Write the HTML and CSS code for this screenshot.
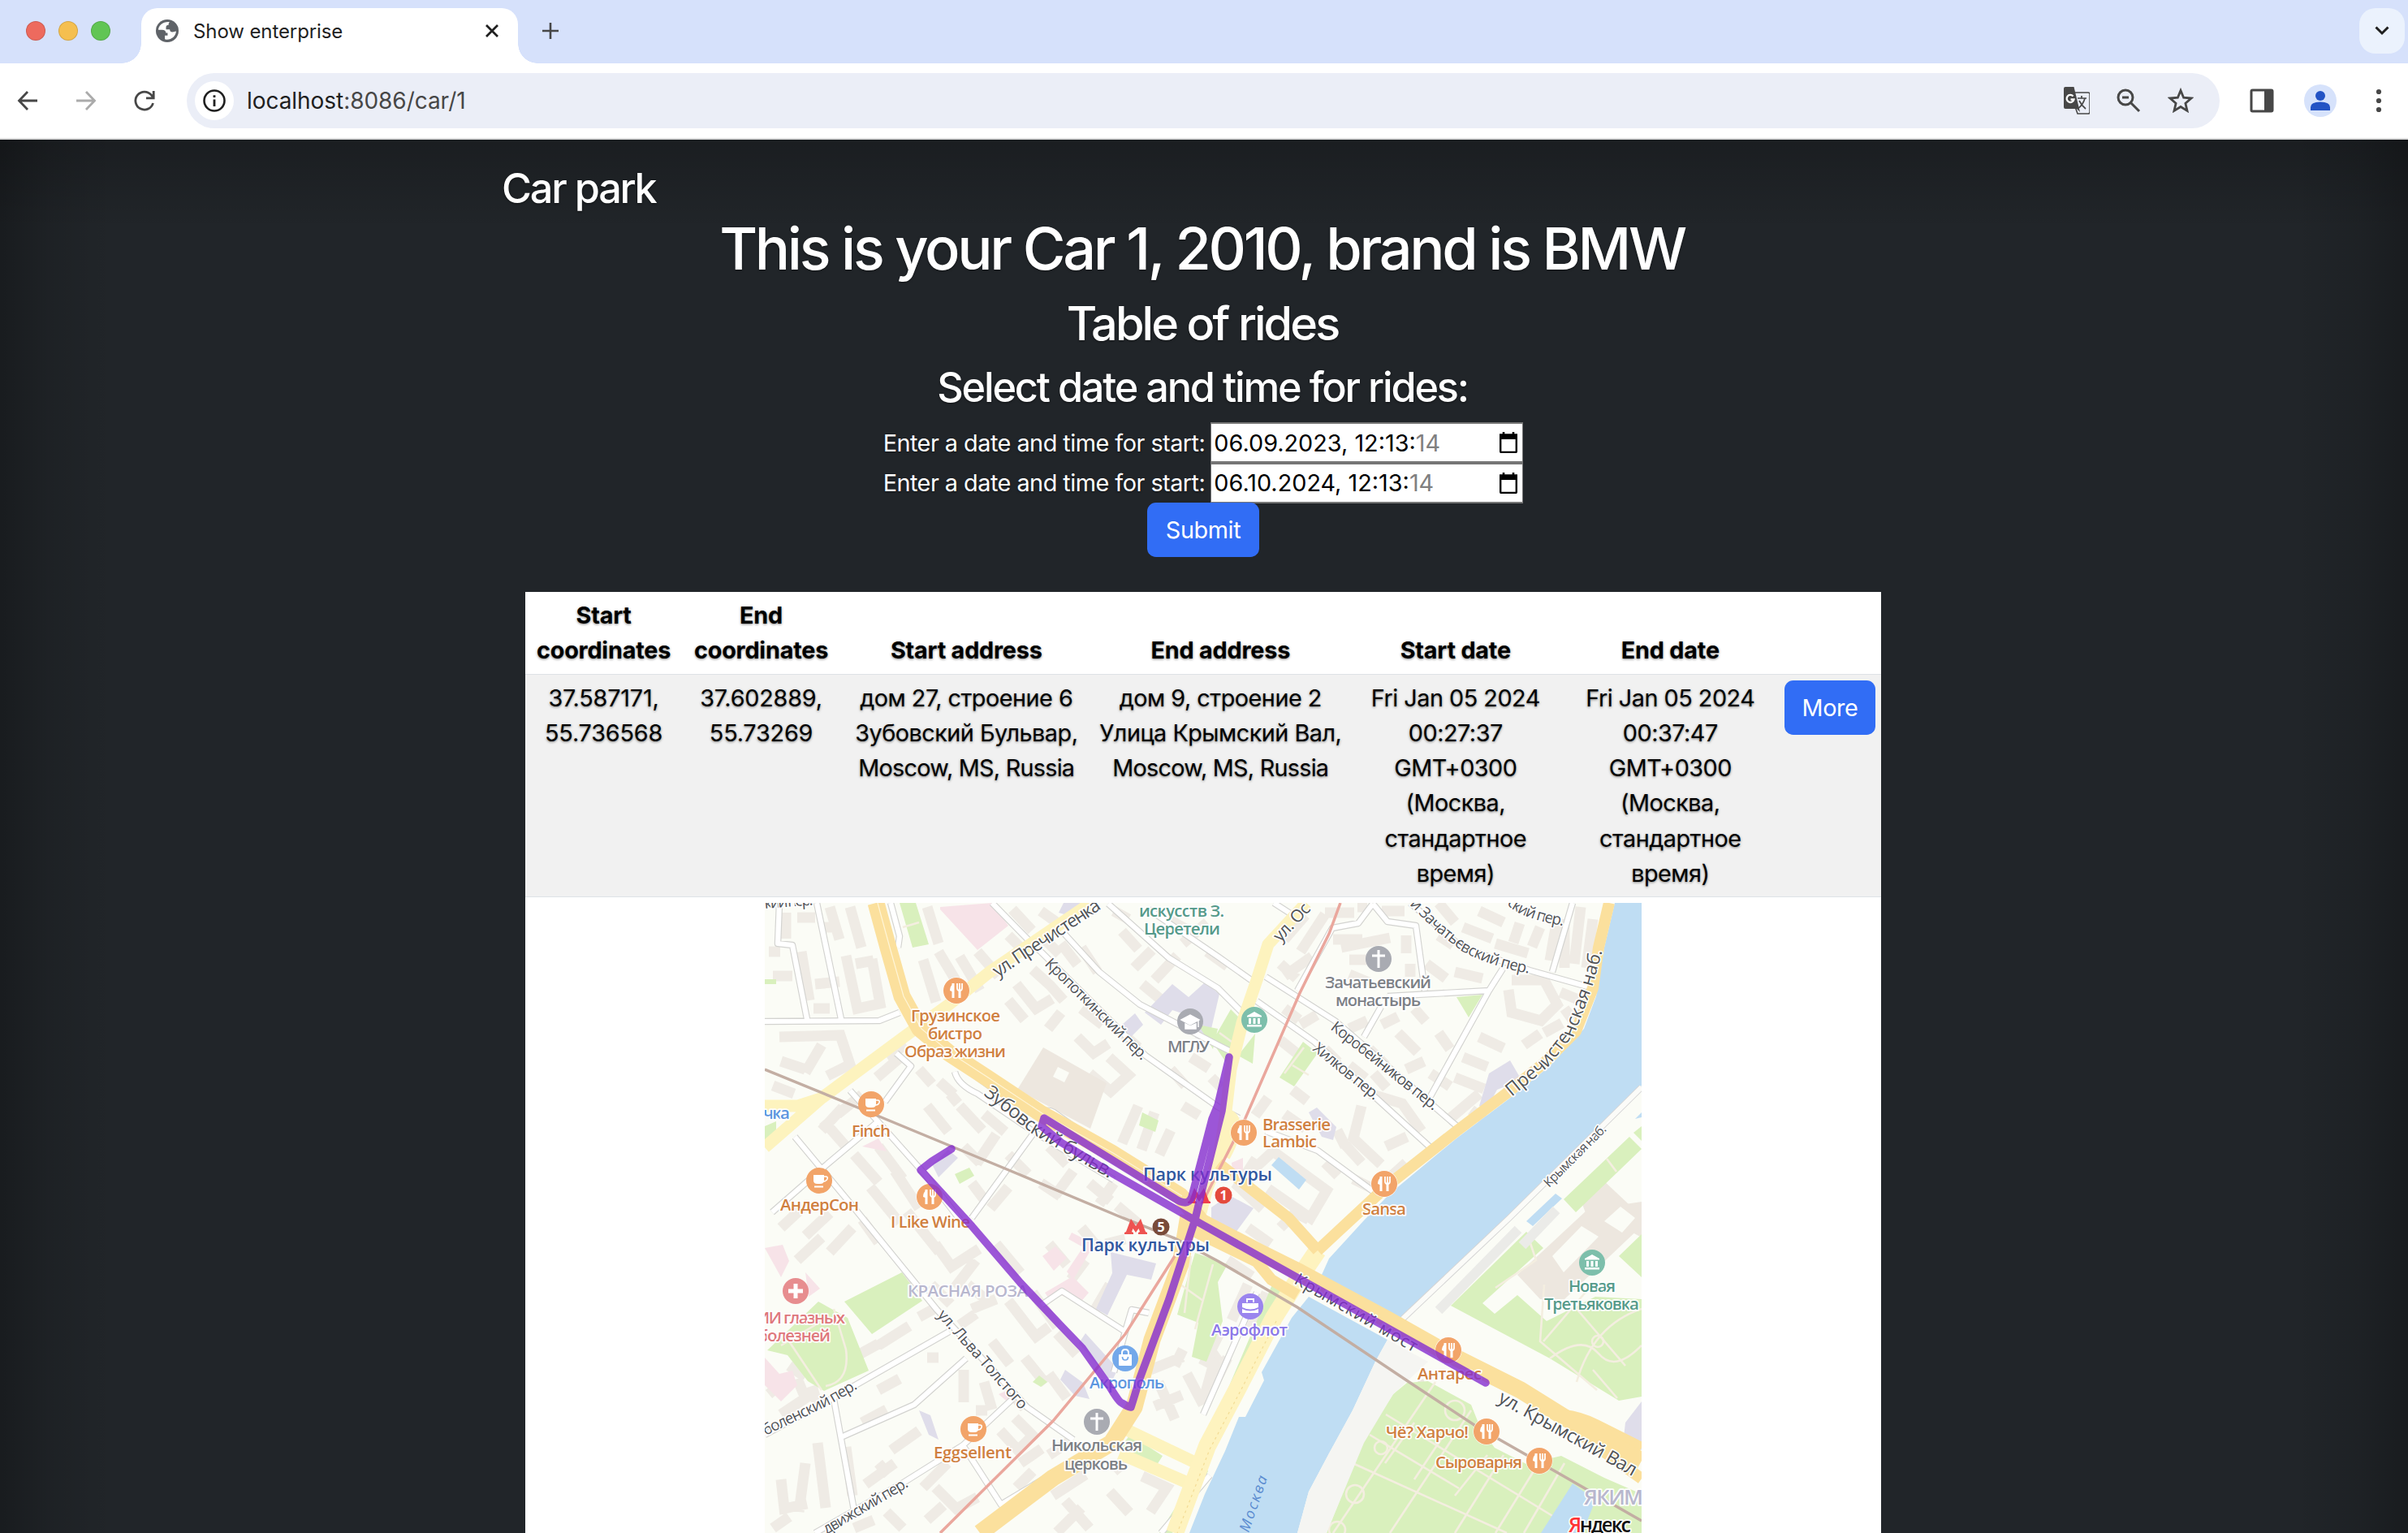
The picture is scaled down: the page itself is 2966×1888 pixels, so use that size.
FILE: index.html
```html
<!DOCTYPE html>
<html lang="en">
<head>
<meta charset="utf-8">
<title>Show enterprise</title>
<link rel="stylesheet" href="styles.css">
</head>
<body>
<div class="browser">
  <div class="tabstrip">
    <div class="lights"><i class="light red"></i><i class="light amber"></i><i class="light green"></i></div>
    <div class="tab">
      <svg class="favicon" viewBox="0 0 24 24"><circle cx="12" cy="12" r="12" fill="#5f6368"/><path fill="#fff" d="M14.500 2.600C7.500 2 2.600 6.500 2.600 11h4c2.600 0 4 1.400 4 3.200h1.800v2.800H9.500v3.800c5 1.800 11.300-2 11.900-8.300-1.500 0-2.200.8-3.800.8-2 0-2.900-1.300-2.900-2.900h-4V8.300c0-1.800.9-2.300 2.600-2.300 0-1.600.4-2.600 1.200-3.400z"/></svg>
      <span class="tab-title">Show enterprise</span>
      <svg class="close" viewBox="0 0 16 16"><path d="M1 1l14 14M15 1L1 15" stroke="#1f1f1f" stroke-width="2.800"/></svg>
    </div>
    <svg class="plus" viewBox="0 0 20 20"><path d="M10 0v20M0 10h20" stroke="#474747" stroke-width="2.600"/></svg>
    <div class="chevron"><svg viewBox="0 0 18 12"><path d="M1.500 1.500L9 9l7.500-7.500" fill="none" stroke="#1f1f1f" stroke-width="3"/></svg></div>
  </div>
  <div class="toolbar">
    <svg class="nav" viewBox="0 0 32 32"><path d="M28 16H6M16 5L5.500 16 16 27" fill="none" stroke="#474747" stroke-width="2.800"/></svg>
    <svg class="nav" viewBox="0 0 32 32"><path d="M4 16h22M16 5l10.500 11L16 27" fill="none" stroke="#ababab" stroke-width="2.800"/></svg>
    <svg class="nav" viewBox="0 0 32 32"><path d="M26.500 19A11 11 0 1 1 24.500 9.200L27 12.500M27.200 4v8.800H18" fill="none" stroke="#474747" stroke-width="2.800"/></svg>
    <div class="omnibox">
      <div class="info"><svg viewBox="0 0 28 28"><circle cx="14" cy="14" r="12.500" fill="none" stroke="#1f1f1f" stroke-width="2.600"/><path d="M14 12.500V21M14 7.200V10" stroke="#1f1f1f" stroke-width="2.800"/></svg></div>
      <span class="url">localhost<span class="path">:8086/car/1</span></span>
      <div class="actions">
        <svg viewBox="0 0 32 34"><path d="M2 0h10.500L20 31l-4-4H2q-2 0-2-2V2q0-2 2-2z" fill="#474747"/><path d="M13.500 7H30q2 0 2 2v22q0 2-2 2H17l-2.500-7" fill="none" stroke="#474747" stroke-width="1.600"/><path d="M17 14h11M22 11v3M26 14q-2 8-9 13M19 17q3 6 8 10" fill="none" stroke="#474747" stroke-width="1.700"/><path d="M11.500 11.500a4.500 4.500 0 1 0 1 4H8.500" fill="none" stroke="#fff" stroke-width="2.300"/></svg>
        <svg viewBox="0 0 32 32"><circle cx="12" cy="12" r="9" fill="none" stroke="#474747" stroke-width="3"/><path d="M8 12h8M18.500 18.500L29 29" stroke="#474747" stroke-width="3"/></svg>
        <svg viewBox="0 0 32 32"><path d="M16 3.500l3.600 8.700 9.400.8-7.100 6.200 2.100 9.200-8-4.900-8 4.900 2.100-9.200L3 13l9.400-.8z" fill="none" stroke="#474747" stroke-width="2.800"/></svg>
      </div>
    </div>
    <svg class="panel" viewBox="0 0 30 30"><rect x="2" y="2" width="26" height="26" rx="1.500" fill="#fff" stroke="#474747" stroke-width="3"/><path d="M18 2h10v26H18z" fill="#474747"/></svg>
    <svg class="avatar" viewBox="0 0 40 40"><circle cx="20" cy="20" r="20" fill="#d6e2fb"/><circle cx="20" cy="14" r="6" fill="#2353c4"/><path d="M8 32v-4q0-6.500 12-6.500T32 28v4z" fill="#2353c4"/></svg>
    <svg class="dots" viewBox="0 0 8 30"><circle cx="4" cy="4" r="3.100"/><circle cx="4" cy="15" r="3.100"/><circle cx="4" cy="26" r="3.100"/></svg>
  </div>
</div>

<div class="page">
  <div class="cover">
    <header><h3 class="brand">Car park</h3></header>
    <main>
      <h1>This is your Car 1, 2010, brand is BMW</h1>
      <h2>Table of rides</h2>
      <h3 class="select">Select date and time for rides:</h3>
      <form>
        <div class="field"><label>Enter a date and time for start:</label><div class="date"><span>06.09.2023, 12:13:<span class="sec">14</span></span><svg viewBox="0 0 22 26"><path d="M5 0v4M17 0v4" stroke="#000" stroke-width="2.600"/><path d="M1.200 3.500h19.600V24q0 1-1 1H2.200q-1 0-1-1z" fill="none" stroke="#000" stroke-width="2.400"/><path d="M0 3h22v6H0z"/></svg></div></div>
        <div class="field"><label>Enter a date and time for start:</label><div class="date"><span>06.10.2024, 12:13:<span class="sec">14</span></span><svg viewBox="0 0 22 26"><path d="M5 0v4M17 0v4" stroke="#000" stroke-width="2.600"/><path d="M1.200 3.500h19.600V24q0 1-1 1H2.200q-1 0-1-1z" fill="none" stroke="#000" stroke-width="2.400"/><path d="M0 3h22v6H0z"/></svg></div></div>
        <button class="btn submit" type="button">Submit</button>
      </form>
      <table class="rides">
        <colgroup><col class="c1"><col class="c2"><col class="c3"><col class="c4"><col class="c5"><col class="c6"><col class="c7"></colgroup>
        <thead><tr><th>Start<br>coordinates</th><th>End<br>coordinates</th><th>Start address</th><th>End address</th><th>Start date</th><th>End date</th><th></th></tr></thead>
        <tbody>
          <tr class="odd"><td class="num-cell">37.587171,<br>55.736568</td><td class="num-cell">37.602889,<br>55.73269</td><td>дом 27, строение 6<br>Зубовский Бульвар,<br><span class="latin">Moscow, MS, Russia</span></td><td>дом 9, строение 2<br>Улица Крымский Вал,<br><span class="latin">Moscow, MS, Russia</span></td><td>Fri Jan 05 2024<br>00:27:37<br>GMT+0300<br>(Москва,<br>стандартное<br>время)</td><td>Fri Jan 05 2024<br>00:37:47<br>GMT+0300<br>(Москва,<br>стандартное<br>время)</td><td><button class="btn more" type="button">More</button></td></tr>
          <tr><td colspan="7">
<svg class="map" viewBox="0 0 1080 776">
  <defs>
    <g id="fork"><circle r="16.500" fill="#fff"/><circle r="16" fill="#f2a469"/><path d="M-4-9v18M4 0v9" stroke="#fff" stroke-width="3"/><path d="M-3-9q-5 3-5 9l5 2z" fill="#fff"/><path d="M1-9v6q0 3 3 3t3-3v-6M4-9v8" fill="none" stroke="#fff" stroke-width="1.800"/></g>
    <g id="cup"><circle r="16" fill="#f2a469"/><path d="M-7-7H6V0q0 4-5 4h-3q-5 0-5-4zM-6 6.500H5v2H-6z" fill="#fff"/><path d="M6-5h2q3 0 2 3-1 3-5 3" fill="none" stroke="#fff" stroke-width="1.600"/></g>
    <g id="cross"><circle r="16" fill="#a9abb2"/><path d="M0-11v22M-8-4H8" stroke="#fff" stroke-width="3"/></g>
    <g id="museum"><circle r="16" fill="#7dbfab"/><path d="M-9-5L0-10 9-5v1.500H-9zM-7-2h3v7h-3zM-1.500-2h3v7h-3zM4-2h3v7H4zM-9 6H9v2.500H-9z" fill="#fff"/></g>
    <path id="metro" d="M-14 10v-2l2-1 6-16L0 0l6-9L12 7l2 1v2H3V8l2-1-1.500-4L0 8-3.500 3-5 7l2 1v2z"/>
    <path id="minor" d="M18 0l-2 50 18 2 18 91M64 0l30 143M0 146l141-1 25-10M155 0l11 41-2 14M280 0l47 48 14 13 128 127 89 63 26 14M617 281l64 24 68 50M369 38l43 47 50 40 96 50 16 8M423 1l75 67 60 37 30 30M473 8l85 58 41 29M606 121l71 50 147 134M617 91l85 54 154 133M627 0l25 16M749 1l-18 24-32 6-43 77M749 1l18 22 35 5 11 80M767 115l125-7 17-27M892 108l-72 130M759 128l-21 37M795 0l64 55 83 28 71 20M995 0l-25 85M37 288l75 90 100 123 111 120 57 40M9 381l64-56 68-57M105 231l36 40 57 64 46 60M330 285l-75 103M162 185l18 16-32 44M234 208q4 16 28 27l68 46 100 60M0 655l87-47 140-80M248 561l-64 57-90 40M85 611l25 137M62 776l107-61 75-47 61-57M244 668l47 73 100-60M341 495l25-17 78 50-14 50M444 528l8-27 21 4M340 262q6-10 16-4l90 64M262 215l28 20-4 12M548 705l-60 71M606 480l-66 150"/>
  </defs>
  <rect width="1080" height="776" fill="#fbfcf6"/>
  <!-- city blocks -->
  <g fill="none" stroke="#efebe5" stroke-width="13">
    <path d="M26 12v32M40 18h22M80 5l12 40M105 5l14 50M70 30h14M45 60l10 60M62 100l30-3M100 65l14 65 28-6-10-55M112 75l22-4M60 130h20M10 90h24M5 60h14M200 5l14 45M214 60l30 50M195 70l16 52M240 66l25 42M262 60l26 30M300 40l22 22M305 8l24 26M340 10l28 20M365 50l20 26M345 45l18 18M390 55l20 30M310 100l24 30 20-12M300 120l20 24M330 82l22 20 16 18M365 135l-16 20M385 165l20 20 18-12M400 210l26 22 22-20-24-22M350 190l24 20M440 35l20 22M455 80l22-22M480 95l28-30M515 50l30-26M500 22l22 12M430 10l18 10M545 60l25 18M465 100l24 20M440 160l20 18M500 205l18 20M525 190l22 14M550 215l12 12M390 130l26 20M460 250l-20 46M480 258l-16 46M500 280l-14 30M515 250l20 12"/>
    <path d="M18 165l75-2 12 36-28 14M70 175l-20 34M20 195l30 10M10 225l26 10M90 260l30-24M70 280l26-28M100 300l-28-32M150 190l24-16M138 215l28-24M190 205l16 18M215 220l18 16M240 250l28 30M200 250l26 32M228 235l10 12M270 260l26 22M285 285l-24 36M245 300l20 20M300 310l24 24M350 300l22 22M380 330l-22 30M340 345l24 16M400 345l26 22M430 345l-18 26M300 350l-22 26M255 345l18 24M460 395l-26-22M110 310l30 34M140 300l30 40M160 330l30 46M130 350l36 44M20 400l28-26M50 410l30-28M80 430l28-30M40 440l30-28M120 390l20 28M175 380l40 50M210 420l20 28 34-22M260 440l-26 34M205 470l24 24M250 470l22 18M285 420l30 36M255 500l30-12M300 490l34 44 16-12M330 480l30 42M360 530l24 26M350 420l22 26M390 400l20 24M395 440l-18 24M425 470l-20 34M420 420l24-6M180 460l-20 26M140 545l38-24M100 565l40-22M190 510l22-12M200 560h14M245 575v40M270 590l10 34M260 625h14M240 520l20-14M280 540l22 28M320 560l26 32M350 580l22 30M300 600l20 22M290 650l22 24 18-18-22-22M315 690l26-18M350 680l24-16M330 700l-20 20M225 690l-30 30M210 720l26 26 26-14M160 690l-36 26M190 650l-34 24M120 640l30-16M140 600l26-14M20 630l30-20-10-24M5 605l24-20M30 570l20 14M58 595l8 26M65 665l10 80M100 670l8 60M50 690l-8 60M20 710l4 36 28-6M140 690l12 14M150 750l20 20M200 760l20-18M110 770l24-10M10 770l20-14M355 730l40-26M360 775l30-30M400 770l-30-34M425 725l24 26M475 750l20-30-30-14M430 700l14-12M475 575l40-16M485 590l20 46M520 580l20 38M480 620l34-14M505 570l10-20M545 545l14 20M550 600l20-40"/>
    <path d="M640 45l26-30M660 60l30-46M640 90l34-24M635 75l20 18M700 45h36M720 70h24M710 55l60-12M790 40v22M795 75v16M720 88l24 10M690 12h36M730 5h12M760 10h28M830 0l20 24M830 40l18 12M815 75l24 18M850 85l34 8M860 30l36 14M900 50l40 12M880 10l30 14M930 25l-8 24M955 30l-10 24M975 25l-8 46M1005 5l-8 70M1020 20l-8 60M985 20v60M920 95h40l16 30-20 20-36-10-4-28M980 110l24 10M985 130l10 14M960 160l22-12M935 175l20-14M880 165l30 14M860 190l30 12M830 160l14 20M820 210l24 16M850 215l36 14M880 235l-40 34M870 255l16 12M780 160l24 24M760 150l20-10M720 155l22-10M745 180l20 20M790 205l22-10M800 130l14 16M750 210l16 18M720 200l20 16M690 180l16 16M660 150l20-12M640 130l18 14M655 185l-20-16M745 235l40 12 24 34M735 250l-10 40 34 32M765 300l26-12M790 320l-20 18M735 320l-20-22M725 340l24 12M640 260l26 18M650 230l18 14M620 240l-16 22M605 315l-22 34 30 28M600 330l26-24 66 48-20 34-52-36M650 380l20 10M690 320l16 16M705 280l10 20"/>
    <path d="M595 400l28 20M570 440l30 20M595 470l-20 44M618 480l-20 46M555 560l-14 50M560 530l-20 40M655 380l-20 20"/>
  </g>
  <g fill="#ede7df">
    <path d="M343 178l78 44-20 56-90-48zM927 458l86-80 67-10v30L985 488h-30zM785 600l26-14 8 20-14 32-22-10z"/>
    <path d="M1005 366l26-26 49 46v26l-22-12-30 26z"/>
  </g>
  <path d="M970 435l36-37 21 13-43 44zM361 202l14 7-6 12-14-7zM1034 392l20-18 18 14-16 18z" fill="#fbfcf6"/>
  <path d="M468 135l34-35 20 16 20-18 18 14-14 60-16-6-4-26-24-8-14 18zM440 150l16-14 10 14-20 20zM206 322l20-18 12 10-24 24zM426 430l56 14-6 20-30-6-24 50-14-8 20-44zM395 530l40 44-8 16-40-48zM370 575l22 16 8 20-18-4-18-20zM880 250l12-40 26-16 14 24-30 12-14 26zM670 258l10-6 24 24-4 16-14-4zM550 375l22-15 30 16-22 30-30-14zM190 625l14 6 10 30-12-6zM368 0h24l-10 18-20-6zM1060 640l20-26v60l-22-16z" fill="#dfddea"/>
  <path d="M216 5l64-5 20 28-38 30-46-50zM0 425l22-4 8 20-10 20zM50 455l18 20-14 10zM342 435l16-12 14 14-16 16zM345 480l34-20 20 20-12 14-24-12-10 10zM0 560l18 20 16-4 6 18-20 20-20-20zM288 605l14-6v18zM120 300l20-10 10 16zM575 320l14-6v24l-12 6zM372 454l20-30-18-10 4-8 28 14-26 44z" fill="#f7e3e8"/>
  <!-- parks -->
  <g fill="#d9f0bd">
    <path d="M166 0h20l16 51-20 4zM98 491l71-36 25 35-62 41zM3 551l63-60 36 20 26 65-55 25-20-12-25-32zM530 431l40 14-12 22 6 48-20 50-18-6 8-42-26-10 14-50zM574 131l14 14-14 60-23-34zM604 161l-3 37-18-10zM663 171l18 14-29 41-18-11zM852 116l32-3-17 28zM845 496l93-91 21 20-75 68 15 13 28-23 36 32 60-30 57 3v120l-28 5-85-52zM1052 435l28-27v53zM984 365l81-77 15 15-81 78zM1070 283l10-8v18zM465 258l20 10-4 14-20-8zM540 690l6 10-44 76h-16zM625 470l12 6-50 110-30 60 6-30zM450 655l40 26-14 22-40-30zM0 94h14v6H0zM0 275l14-6v12L0 298zM234 334l18-8 6 10-18 10zM534 150l24 5-6 25zM330 590l8-8 10 8-8 6z"/>
    <path d="M774 605l17-14 26-2 53 29 12 30 17 23 39 20 43-10 53 27 46 20v48H692l46-115z"/>
  </g>
  <g fill="none" stroke="#f4eee0" stroke-width="2.600">
    <path d="M765 630l230 140M724 690l190 86M826 590L700 776M870 625l-100 151M910 680l-60 96M950 695l-50 81M985 690l-50 86M800 640l-36 50M840 650l-40 60M745 655l110 66M890 680l-40 50M960 470l-5 70 70 60M940 410l10 30-50 34M959 540l60-70M1000 500l60 70M967 561q40-30 60-6t53-10M1000 590q20-70 80-90M1020 575l30 35M30 540l40 60M85 500l15 50q5 40-25 45M20 545l50-30M512 470l28 20M525 435l-8 70M552 445l-22 80M560 160l22 16M640 210l24-32M650 200l20 12M1037 315l12 16M170 30l20-6"/>
    <circle cx="759" cy="671" r="8"/><circle cx="727" cy="728" r="11"/><circle cx="1026" cy="540" r="7"/><circle cx="705" cy="772" r="10"/><circle cx="850" cy="625" r="12"/>
  </g>
  <!-- river -->
  <g fill="#bfddf3">
    <path d="M1047 0h33v225L917 388 781 513l-95-55 9-20 43-47 32-33 82-68 65-49 50-40 42-46 15-40 10-60z"/>
    <path d="M670 485l97 53-15 27-28 60-29 53-25 47-14 51H523l19-48 25-53 17-42h8l23-45-3-10 37-67z"/>
    <path d="M633 313l34 28-9 12-34-30zM974 358l8 6-36 34-8-6zM995 715l22 16 4 10-14 35h-51zM1080 258l-8 8 8-2z"/>
  </g>
  <path d="M767 538l50 27-43 40-36 60-46 111h-36l14-51 25-47 29-53 28-60z" fill="#f5f5f2"/>
  <path d="M1080 227L917 388 786 512" fill="none" stroke="#d5d5d5" stroke-width="8"/><path d="M1080 227L917 388 786 512" fill="none" stroke="#fbfbf8" stroke-width="6"/>
  <path d="M928 402L830 502M975 378l-42 44" stroke="#ebebe8" stroke-width="12"/>
  <!-- streets: casing, then surface -->
  <g fill="none" stroke-linejoin="round">
    <use href="#minor" stroke="#d3d3d0" stroke-width="8.500"/>
    <use href="#minor" stroke="#fff" stroke-width="6.200"/>
    <!-- yellow streets -->
    <path stroke="#fdf3be" stroke-width="15" d="M402 0L277 85l-50 40-50 36L69 241 0 301M0 250l41 0 28-9M444 648l90 43M437 678l86 37M667 0l-47 51-14 44-18 53-14 57-7 60-8 50-14 36-8 30M572 262q16 10-6 50"/>
    <path stroke="#fef3bf" stroke-width="22" d="M681 428l-25 37-29 46-43 84-39 74-40 107"/>
    <!-- ring road and embankment -->
    <path stroke="#fbe09d" stroke-width="14" d="M1040 0l-13 55-7 50-21 53-40 40-46 37-61 46-85 67-43 40-43 40M559 321l86 67 36 40M520 400l86 42 18 22 32 19M984 631l29 30 67 48M984 631q20 2 40 12l56 28"/>
    <path stroke="#fbe09d" stroke-width="21" d="M137 0l15 55 17 60 22 40 36 30 46 30 68 45 86 48 85 53 26 32 71 37 50 25 108 58 78 44 86 43 53 33 96 54M522 385l-10 60-35 93-22 83-28 44-72 43-90 68"/>
  </g>
  <g fill="none" stroke="#fff5d6" stroke-width="1.200"><path d="M139 0l15 55 17 60 22 40 36 30 46 30 68 45 86 48 85 53"/><path d="M630 515l-43 84-39 74-40 103" stroke="#f3dc95" stroke-dasharray="3 4"/></g>
  <!-- metro lines -->
  <path d="M0 205l112 46 186 77 143 60 64 25 53 28 98 57 139 93 82 54 93 53 110 63" fill="none" stroke="#c3aea3" stroke-width="3.500"/>
  <path d="M709 0l-14 38-36 73-67 154-54 106M505 435l-61 96-89 107-139 138" fill="none" stroke="#eaa79d" stroke-width="3.500"/>

  <!-- street names -->
  <defs>
    <path id="s1" d="M287 92L418 5"/><path id="s2" d="M344 76L466 196"/><path id="s3" d="M269 236l60 48 100 58"/><path id="s4" d="M635 49l42-45"/><path id="s5" d="M794 2l30 30 34 27q36 20 90 29"/><path id="s6" d="M914 1q14 18 74 28"/><path id="s7" d="M696 155L826 258"/><path id="s8" d="M674 181L753 245"/><path id="s9" d="M920 239l45-37 33-42 20-52 14-50"/><path id="s10" d="M966 351L1040 277"/><path id="s11" d="M651 468L803 556"/><path id="s12" d="M902 614L1072 708"/><path id="s13" d="M212 508l50 56 58 66"/><path id="s14" d="M1 656l77-37 38-22"/><path id="s15" d="M76 778L180 717"/><path id="s16" d="M0 7L64 2"/><path id="s17" d="M596 776L622 700"/>
  </defs>
  <g class="street">
    <text font-size="22.500"><textPath href="#s1" textLength="154">ул. Пречистенка</textPath></text>
    <text font-size="19"><textPath href="#s2" textLength="169">Кропоткинский пер.</textPath></text>
    <text font-size="23.500"><textPath href="#s3" textLength="187">Зубовский бульв.</textPath></text>
    <text font-size="21"><textPath href="#s4" textLength="56">ул. Ос</textPath></text>
    <text font-size="19"><textPath href="#s5" textLength="174">й Зачатьевский пер.</textPath></text>
    <text font-size="19"><textPath href="#s6" textLength="76">ский пер.</textPath></text>
    <text font-size="19"><textPath href="#s7" textLength="163">Коробейников пер.</textPath></text>
    <text font-size="19"><textPath href="#s8" textLength="99">Хилков пер.</textPath></text>
    <text font-size="22.500"><textPath href="#s9" textLength="218">Пречистенская наб.</textPath></text>
    <text font-size="16"><textPath href="#s10" textLength="101">Крымская наб.</textPath></text>
    <text font-size="21"><textPath href="#s11" textLength="171">Крымский мост</textPath></text>
    <text font-size="23"><textPath href="#s12" textLength="191">ул. Крымский Вал</textPath></text>
    <text font-size="19"><textPath href="#s13" textLength="156">ул. Льва Толстого</textPath></text>
    <text font-size="19"><textPath href="#s14" textLength="128">боленский пер.</textPath></text>
    <text font-size="19"><textPath href="#s15" textLength="118">движский пер.</textPath></text>
    <text font-size="19"><textPath href="#s16" textLength="60">кий пер.</textPath></text>
    <text font-size="18" class="water"><textPath href="#s17" textLength="72">Москва</textPath></text>
  </g>

  <!-- places -->
  <use href="#fork" x="236" y="108"/><use href="#fork" x="203" y="362"/><use href="#fork" x="590" y="283"/><use href="#fork" x="763" y="346"/><use href="#fork" x="842" y="551"/><use href="#fork" x="889" y="651"/><use href="#fork" x="954" y="687"/>
  <use href="#cup" x="131" y="248"/><use href="#cup" x="67" y="342"/><use href="#cup" x="257" y="648"/>
  <use href="#cross" x="756" y="69"/><use href="#cross" x="409" y="639"/>
  <use href="#museum" x="603" y="144"/><use href="#museum" x="1019" y="443"/>
  <circle cx="524" cy="146" r="16" fill="#a9abb2"/><path d="M513 144l11-6 11 6-11 6zM518 149l6 3 7-3v6h-13zM534 145v8" fill="#fff" stroke="#fff" stroke-width="1.500"/>
  <circle cx="38" cy="478" r="16" fill="#e78d8f"/><path d="M38 469v18M29 478h18" stroke="#fff" stroke-width="5"/>
  <circle cx="444" cy="561" r="16" fill="#73a8ea"/><path d="M437 557h14v12h-14z" fill="#fff" stroke="#fff" stroke-width="2" stroke-linejoin="round"/><path d="M440 556v-2q0-4 4-4t4 4v2" fill="none" stroke="#fff" stroke-width="2"/><path d="M440.500 559q0 4 3.500 4t3.500-4" fill="none" stroke="#73a8ea" stroke-width="1.700"/>
  <circle cx="598" cy="497" r="16" fill="#9a84ee"/><path d="M588 493h20v5q-10 5-20 0zM588 500q10 5 20 0v5h-20z" fill="#fff"/><path d="M594 492v-4h8v4" fill="none" stroke="#fff" stroke-width="2"/>
  <use href="#metro" x="457" y="398" fill="#ee5351"/><circle cx="488" cy="399" r="10.500" fill="#794b3a"/>
  <use href="#metro" x="535" y="360" fill="#ee3f4c"/><circle cx="565" cy="360" r="10.500" fill="#e44a3c"/>
  <g class="num"><text x="488" y="405">5</text><text x="565" y="366">1</text></g>
  <g class="poi food">
    <text x="180" y="146" textLength="110">Грузинское</text><text x="201" y="168" textLength="67">бистро</text><text x="172" y="190" textLength="125">Образ жизни</text>
    <text x="107" y="288" textLength="48">Finch</text><text x="19" y="379" textLength="97">АндерСон</text><text x="155" y="400" textLength="98">I Like Wine</text>
    <text x="613" y="280" textLength="84">Brasserie</text><text x="613" y="301" textLength="67">Lambic</text><text x="736" y="384" textLength="54">Sansa</text>
    <text x="208" y="684" textLength="96">Eggsellent</text><text x="804" y="587" textLength="79">Антарес</text><text x="765" y="659" textLength="102">Чё? Харчо!</text><text x="826" y="696" textLength="107">Сыроварня</text>
  </g>
  <g class="poi teal"><text x="461" y="17" textLength="105">искусств З.</text><text x="467" y="39" textLength="94">Церетели</text><text x="990" y="479" textLength="58">Новая</text><text x="960" y="501" textLength="117">Третьяковка</text></g>
  <g class="poi gray"><text x="496" y="184" textLength="52">МГЛУ</text><text x="690" y="105" textLength="131">Зачатьевский</text><text x="703" y="127" textLength="105">монастырь</text><text x="353" y="675" textLength="112">Никольская</text><text x="369" y="698" textLength="78">церковь</text></g>
  <g class="poi blue"><text x="-2" y="266" textLength="33">чка</text><text x="400" y="598" textLength="92">Акрополь</text></g>
  <g class="poi violet"><text x="550" y="533" textLength="94">Аэрофлот</text></g>
  <g class="poi rose"><text x="-10" y="518" textLength="109">ИИ глазных</text><text x="-8" y="540" textLength="89">болезней</text></g>
  <g class="poi station"><text x="466" y="342" textLength="159">Парк культуры</text><text x="390" y="429" textLength="158">Парк культуры</text></g>
  <g class="poi district"><text x="176" y="485" textLength="148">КРАСНАЯ РОЗА</text><text class="big" x="1009" y="741" textLength="73">ЯКИМ</text></g>

  <!-- driven track -->
  <path class="track" d="M230 303l-24 15-14 11 63 69 60 70 50 53 26 27 34 48q12 20 15 20 6 4 11 5 4-12 10-33l37-100 32-98 8-34 25-100 9-66-14 59-7 17-25 96q-3 7-8 7-6 0-13-5L344 265l-3 10 24 20 63 38 102 58 7 4 351 196"/>
  <text class="yandex" x="990" y="775" textLength="77"><tspan fill="#f33">Я</tspan>ндекс</text>
</svg>
          </td></tr>
        </tbody>
      </table>
    </main>
  </div>
</div>
</body>
</html>
```
FILE: styles.css
```css
* { box-sizing: border-box; }
html { font-size: 28.8px; }
body {
  margin: 0;
  height: 1888px;
  overflow: hidden;
  display: flex;
  flex-direction: column;
  background: #212529;
  font-family: Inter, "Liberation Sans", sans-serif;
}
svg { display: block; flex: none; }

/* browser window */
.browser { flex: none; height: 172px; background: #fff; border-bottom: 2px solid #dcdcdc; }
.tabstrip { height: 78px; display: flex; align-items: center; background: #d6e1fb; padding: 0 4px 2px 32px; }
.lights { display: flex; gap: 16px; width: 142px; }
.light { width: 24px; height: 24px; border-radius: 50%; border: 1px solid #0002; }
.red { background: #ed6a5e; }
.amber { background: #f5bf4f; }
.green { background: #61c554; }
.tab {
  position: relative;
  width: 464px;
  height: 68px;
  margin-top: 10px;
  align-self: flex-start;
  display: flex;
  align-items: center;
  padding: 0 24px 12px 18px;
  background: #fff;
  border-radius: 20px 20px 0 0;
}
.tab::before, .tab::after {
  content: "";
  position: absolute;
  bottom: 0;
  width: 24px;
  height: 24px;
}
.tab::before { left: -24px; background: radial-gradient(circle at 0 0, #d6e1fb 23.5px, #fff 24px); }
.tab::after { right: -24px; background: radial-gradient(circle at 100% 0, #d6e1fb 23.5px, #fff 24px); }
.favicon { width: 28px; height: 28px; }
.tab-title { flex: 1; margin-left: 18px; font-size: 24px; letter-spacing: -0.1px; color: #1f1f1f; }
.close { width: 16px; height: 16px; }
.plus { width: 20px; height: 20px; margin-left: 30px; }
.chevron {
  width: 56px;
  height: 56px;
  margin-left: auto;
  border-radius: 20px;
  background: #ebf2fd;
  display: grid;
  place-items: center;
}
.chevron svg { width: 18px; height: 12px; }
.toolbar { height: 92px; display: flex; align-items: center; padding: 0 32px 0 18px; }
.nav { width: 32px; height: 32px; margin-right: 40px; }
.omnibox {
  width: 2504px;
  height: 68px;
  margin-left: -4px;
  border-radius: 34px;
  background: #ebeef7;
  display: flex;
  align-items: center;
  padding: 0 32px 0 10px;
}
.info { width: 48px; height: 48px; border-radius: 50%; background: #fff; display: grid; place-items: center; }
.info svg { width: 28px; height: 28px; }
.url { margin-left: 16px; font-size: 28px; letter-spacing: -.05px; color: #1f1f1f; }
.path { color: #474747; }
.actions { margin-left: auto; display: flex; gap: 32px; }
.actions svg { width: 32px; height: 34px; }
.panel { width: 30px; height: 30px; margin-left: 37px; }
.avatar { width: 40px; height: 40px; margin-left: 37px; }
.dots { width: 8px; height: 30px; margin-left: auto; fill: #474747; }

/* page */
.page {
  flex: none;
  height: 1716px;
  overflow: hidden;
  padding-right: 2px;
  color: #fff;
  text-align: center;
  text-shadow: 0 1.44px 2.88px rgba(0, 0, 0, .5);
  background:
    linear-gradient(#0003, #0000 110px),
    linear-gradient(90deg, #00000040, #0000001a 60px, #0000 140px, #0000 calc(100% - 140px), #0000001a calc(100% - 60px), #00000040);
  font-size: 28.8px;
  line-height: 1.5;
}
.cover { width: 1728px; margin: 0 auto; padding-top: 30.3px; }
main { padding: 0 28.8px; }
h1, h2, h3 { margin: 0 0 14.4px; font-weight: 550; line-height: 1.2; white-space: nowrap; }
h1 { font-size: 72px; letter-spacing: -3.3px; text-indent: -3px; }
h2 { font-size: 57.6px; letter-spacing: -2.9px; text-indent: -2px; }
h3 { font-size: 50.4px; letter-spacing: -2.2px; }
.brand { margin: 0; text-align: left; }
.select { margin-bottom: 12.9px; text-indent: -2px; }
form { display: flex; flex-direction: column; align-items: center; height: 208.5px; }
.field { display: flex; align-items: center; gap: 7px; height: 49.5px; }
label { letter-spacing: -.5px; }
.date {
  width: 385px;
  height: 50px;
  padding: 0 6px 0 3px;
  display: flex;
  align-items: center;
  justify-content: space-between;
  background: #fff;
  border: 2px solid #767676;
  border-width: 2px 1px;
  color: #000;
  text-shadow: none;
}
.date .sec { color: #808080; }
.date svg { width: 22px; height: 26px; }
.btn {
  display: block;
  height: 67px;
  padding: 0;
  border: 0;
  border-radius: 10.8px;
  background: #316df5;
  color: #fff;
  font: inherit;
  letter-spacing: -.4px;
}
.submit { width: 138px; }
.more { width: 112px; margin-left: 1px; }
.rides {
  width: 1670px;
  table-layout: fixed;
  border-collapse: separate;
  border-spacing: 0;
  background: #fff;
  color: #000;
  letter-spacing: -.5px;
}
.c1 { width: 193.5px; } .c2 { width: 194.5px; } .c3 { width: 311px; } .c4 { width: 315px; }
.c5 { width: 264px; } .c6 { width: 265px; } .c7 { width: 127px; }
.rides th, .rides td { padding: 7.2px; vertical-align: top; white-space: nowrap; border-bottom: 1px solid #dee2e6; }
.rides th { vertical-align: bottom; font-weight: 700; letter-spacing: -.2px; }
.rides .num-cell { letter-spacing: -.2px; }
.latin { letter-spacing: -.75px; }
.odd td { background: #f1f1f1; }

/* map */
.map { width: 1080px; height: 776px; margin: 0 auto; font-family: "Open Sans", "Noto Sans", sans-serif; text-shadow: none; letter-spacing: 0; }
.map text { text-anchor: start; paint-order: stroke; stroke: #fffffff0; stroke-width: 3.5px; stroke-linejoin: round; }
.street { fill: #505357; font-weight: 500; }
.street .water { fill: #5a8bd0; stroke: none; font-style: italic; }
.poi { font-size: 20.5px; font-weight: 600; }
.food { fill: #d08040; }
.teal { fill: #559a8a; }
.gray { fill: #7c8086; }
.blue { fill: #5c96e0; }
.violet { fill: #8b78e8; }
.rose { fill: #df787c; }
.station { fill: #3158a0; font-size: 21.5px; }
.district { fill: #b8b7ce; }
.district .big { font-size: 26px; }
.map .num text { fill: #fff; stroke: none; font-size: 16px; font-weight: 700; text-anchor: middle; }
.track { fill: none; stroke: #842cd0; stroke-opacity: .8; stroke-width: 9.5; stroke-linecap: round; stroke-linejoin: round; }
.map .yandex { font-size: 25px; font-weight: 600; fill: #111; }
```
